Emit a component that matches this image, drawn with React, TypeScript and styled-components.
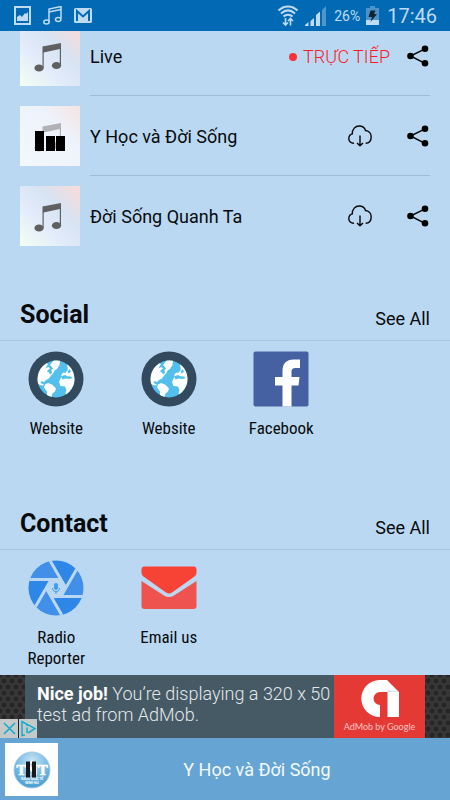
import React from "react";
import styled, { createGlobalStyle } from "styled-components";

const GlobalStyle = createGlobalStyle`
  *, *::before, *::after { box-sizing: border-box; }
  body { margin: 0; background: #bad8f2; font-family: Roboto, "Liberation Sans", sans-serif; color: #080a0c; }
  button { padding: 0; border: 0; background: none; color: inherit; font: inherit; cursor: pointer; }
  a { color: inherit; text-decoration: none; }
  h2, p, ul { margin: 0; padding: 0; list-style: none; }
  svg { display: block; flex: none; }
`;

const Screen = styled.div`
  display: flex;
  flex-direction: column;
  height: 100vh;
  background: #bad8f2;
`;

const StatusBar = styled.header`
  display: flex;
  justify-content: space-between;
  align-items: center;
  flex: none;
  height: 31px;
  padding: 0 13px 0 14px;
  background: #026ab5;
  color: #bedbf1;
`;

const StatusGroup = styled.div<{ $gap: number }>`
  display: flex;
  align-items: center;
  gap: ${(p) => p.$gap}px;
`;

const Battery = styled.span`
  padding-left: 2px;
  font-size: 14px;
`;

const Clock = styled.time`
  padding-left: 2px;
  font-size: 20px;
  line-height: 30px;
`;

const Content = styled.main`
  flex: 1;
  min-height: 0;
  overflow: hidden;
`;

const TrackList = styled.ul`
  && { margin-top: -15px; }
`;

const TrackRow = styled.li`
  display: flex;
  align-items: center;
  gap: 10px;
  padding: 0 20px;
`;

const Cover = styled.div<{ $dim?: boolean }>`
  display: flex;
  flex: none;
  width: 60px;
  height: 60px;
  background: ${(p) =>
    p.$dim
      ? "linear-gradient(45deg, #f3f8fb, #edf3fa 65%, #f6e3e4)"
      : "linear-gradient(45deg, #f3fff2, #e2ebfa 38%, #d7e3f3 65%, #fadbd8)"};
`;

const TrackBody = styled.div<{ $last?: boolean }>`
  display: flex;
  flex: 1;
  align-items: center;
  height: 80px;
  padding-top: 1px;
  border-bottom: 1px solid ${(p) => (p.$last ? "transparent" : "#9fbdd8")};
`;

const TrackTitle = styled.span`
  flex: 1;
  padding-top: 2px;
  font-size: 18px;
  line-height: 22px;
`;

const LiveTag = styled.span`
  display: flex;
  align-items: center;
  gap: 6px;
  margin-right: 17px;
  padding-top: 2px;
  color: #fb1c26;
  font-size: 18px;
  font-weight: 300;
  line-height: 22px;

  &::before {
    content: "";
    width: 8px;
    height: 8px;
    border-radius: 50%;
    background: #fb303a;
  }
`;

const IconButton = styled.button<{ $gap?: number }>`
  margin-right: ${(p) => p.$gap ?? 0}px;
`;

const SectionHead = styled.div`
  display: flex;
  justify-content: space-between;
  align-items: flex-end;
  height: 85px;
  padding: 0 20px 9px;
  border-bottom: 1px solid #a5c5e0;
`;

const SectionTitle = styled.h2`
  font-size: 25px;
  line-height: 32px;
  font-weight: 700;
`;

const SeeAll = styled.a`
  font-size: 18px;
  line-height: 24px;
`;

const Tiles = styled.ul`
  display: grid;
  grid-template-columns: repeat(4, 1fr);
  min-height: 124px;
  && { padding-top: 10px; }
`;

const Tile = styled.a`
  display: flex;
  flex-direction: column;
  align-items: center;
  gap: 11px;
  padding: 0 16px;
  font-family: "Roboto Condensed", Roboto, sans-serif;
  font-size: 17px;
  line-height: 21px;
  text-align: center;
`;

const AdStrip = styled.aside`
  position: relative;
  display: flex;
  flex: none;
  height: 63px;
  padding: 0 25px;
  background-color: #383838;
  background-image: radial-gradient(circle, #262626 2px, transparent 3px),
    radial-gradient(circle, #262626 2px, transparent 3px);
  background-size: 8px 12px;
  background-position: 0 0, 4px 6px;
`;

const AdCopy = styled.a`
  flex: 1;
  padding: 8px 2px 0 12px;
  background: #465a65;
  color: #e2e8eb;
  font-size: 18px;
  font-weight: 300;
  line-height: 21px;

  strong { color: #fff; font-weight: 700; }
`;

const AdBrand = styled.a`
  display: flex;
  flex-direction: column;
  align-items: center;
  width: 91px;
  padding-top: 4px;
  gap: 2px;
  background: #e53935;
  color: #f9c6c4;
  font-family: Lato, sans-serif;
  font-size: 9px;
  line-height: 14px;
  white-space: nowrap;
`;

const AdControls = styled.div`
  position: absolute;
  left: 0;
  bottom: 0;
  display: flex;
  gap: 1px;
  background: #222;

  button { background: #c6c9ca; }
`;

const Player = styled.footer`
  display: flex;
  align-items: center;
  flex: none;
  height: 62px;
  padding: 0 2px 0 5px;
  background: #66a5d3;
  color: #f3f9fe;
`;

const PlayerCover = styled.button`
  flex: none;
  width: 53px;
  height: 53px;
  && { background: #fff; }
`;

const NowPlaying = styled.p`
  flex: 1;
  padding-left: 8px;
  font-size: 18px;
  text-align: center;
`;

const PictureIcon = () => (
  <svg width="17" height="19" viewBox="0 0 17 19">
    <path fill="#bedbf1" fillRule="evenodd" d="M0 0h17v19H0zM2 2v15h13V2z" />
    <path fill="#bedbf1" d="M3 15v-4l3-2 2 2 3-4 1 1 2-2v9z" />
  </svg>
);

const StatusNoteIcon = () => (
  <svg width="19" height="19" viewBox="0 0 19 19" fill="none" stroke="#bedbf1" strokeWidth="1.5">
    <path d="M6 15.5V3l12-2.5v12M6 6l12-2.5" />
    <ellipse cx="3.5" cy="16" rx="2.7" ry="2" />
    <ellipse cx="15.2" cy="13.5" rx="2.7" ry="2" />
  </svg>
);

const MailStatusIcon = () => (
  <svg width="18" height="15" viewBox="0 0 18 15">
    <rect width="18" height="15" rx="1.5" fill="#bedbf1" />
    <path d="M3 13V3l6 5.5L15 3v10" fill="none" stroke="#026ab5" strokeWidth="2" />
  </svg>
);

const WifiIcon = () => (
  <svg width="22" height="22" viewBox="0 0 22 22" fill="none" stroke="#bedbf1" strokeWidth="2">
    <path d="M1.500 5.500C7 0 15 0 20.500 5.500M4 8.500C8.500 4.500 13.500 4.500 18 8.500M6.500 11.500C9 9 13 9 15.500 11.500" />
    <path d="M8.500 13v7M6 17.500 8.500 20l2.500-2.500M13.500 20.500v-7M11 16l2.500-2.500L16 16" strokeWidth="1.600" />
  </svg>
);

const SignalIcon = () => (
  <svg width="21" height="20" viewBox="0 0 21 20" fill="#bedbf1">
    <path d="M0 20v-1l3.500-3v4zM5.500 20v-5L9 12v8zM11 20V9l4-3.500V20z" />
    <path d="M17 20V4l4-4v20z" opacity=".4" />
  </svg>
);

const BatteryIcon = () => (
  <svg width="13" height="19" viewBox="0 0 13 19">
    <path d="M4 0h5v2h4v17H0V2h4z" fill="#4d93c8" />
    <path d="M0 14h13v5H0z" fill="#bedbf1" />
    <path d="M4.500 4.500h5L8 8h3l-6.500 8L6 11H2.500z" fill="#102533" />
  </svg>
);

const NoteArt = ({ dim = false }: { dim?: boolean }) => (
  <svg width="60" height="60" viewBox="0 0 60 60">
    <g fill={dim ? "#b0b2b5" : "#606062"}>
      <path d="M22.500 20.500 41 17v22h-1.200V23L23.700 26.500V42h-1.200z" />
      <ellipse cx="19" cy="42" rx="4.600" ry="3.600" />
      <ellipse cx="36.500" cy="39.500" rx="4.600" ry="3.600" />
    </g>
    {dim && <path d="M15 25h9v20h-9zM26 30h9v15h-9zM36 30h9v15h-9z" fill="#000" />}
  </svg>
);

const ShareIcon = () => (
  <svg width="23" height="22" viewBox="0 0 23 22">
    <path d="M18 3.800 3.500 11 18 18.300" fill="none" stroke="#080808" strokeWidth="1.500" />
    <circle cx="3.500" cy="11" r="3.300" />
    <circle cx="18" cy="3.800" r="3.300" />
    <circle cx="18" cy="18.300" r="3.300" />
  </svg>
);

const CloudIcon = () => (
  <svg width="24" height="22" viewBox="0 0 24 22" fill="none" stroke="#080808" strokeWidth="1.400">
    <path d="M6 18.300C3 18.500.8 16.500.8 13.500c0-2.300 1.300-4 3.500-4.600C4.200 4 7.200 1 11.200 1c3.300 0 5.500 1.800 6.300 4.500 3.300.3 5.700 2.800 5.700 6.300 0 3.800-2.200 6.400-5.500 6.500" />
    <path d="M12 10.500v10M9 18l3 2.700 3-2.700" />
  </svg>
);

const GlobeIcon = () => (
  <svg width="56" height="56" viewBox="0 0 56 56">
    <clipPath id="globe"><circle cx="28" cy="28" r="18.500" /></clipPath>
    <circle cx="28" cy="28" r="27.500" fill="#32495e" />
    <circle cx="28" cy="28" r="18.500" fill="#52bfec" />
    <g fill="#fff" clipPath="url(#globe)">
      <path d="M8 31V18l8-7 4 2-2.500 4.500 3-1.500 1.500 1.500-2 1.500-1 1.500 2 1 1 2 2-1.500-.500-3 1.500-1.500-1.500-2L22 14l4-5h6l-.5 5-2.500 4-2.500 1.500-1 2.500-2.500 2.500-2 3-3 1.500-2 2-2.500-1-1 2 3.500 1.500-1 1-3-.5z" />
      <path d="M17 33.500l3-1.500 4 1.500 4 4-1 3-2.500 2-1.500 5-4-2v-5l-3-4z" />
      <path d="M39 12l10 9v20l-10 5-1.500-4 1-3-1.500-3.500-4.500-.500-1.500-4 1.500-3.500 1-1.500v-3l2-1.500 4-3z" />
    </g>
    <g fill="#52bfec">
      <path d="M37 14.500l2.500 2v3L37 22l-2-1v-4zM41.500 18l1.500 2.500-2 2-1.500-1.500z" />
      <path d="M33 25.500l4-1.500 2.500 1.200 3.500.3 1.500 1.500-3 1-4-.5-3 1z" />
    </g>
  </svg>
);

const FacebookIcon = () => (
  <svg width="56" height="56" viewBox="0 0 56 56">
    <rect x=".5" y=".5" width="55" height="55" rx="2" fill="#4661a2" />
    <path d="M29.500 55.500V34.500H22V26h7.500v-6c0-7.500 4-11.500 11-11.500h6.500V17h-4.500c-3 0-4 1.200-4 3.500V26h8l-1 8.500h-7v21z" fill="#fff" />
  </svg>
);

const ReporterIcon = () => (
  <svg width="56" height="56" viewBox="-28 -28 56 56">
    <clipPath id="lens"><circle r="27.500" /></clipPath>
    <g clipPath="url(#lens)">
      {[0, 60, 120, 180, 240, 300].map((angle, i) => (
        <path
          key={angle}
          d="M4.900 8.500H44L25 -26.200z"
          transform={`rotate(${angle})`}
          fill={i % 2 ? "#2e86e6" : "#418fe8"}
        />
      ))}
      {[0, 60, 120, 180, 240, 300].map((angle) => (
        <path key={angle} d="M-5 8.500H30" transform={`rotate(${angle})`} stroke="#bad8f2" strokeWidth="3" />
      ))}
    </g>
    <rect x="-2" y="-5" width="4" height="7" rx="2" fill="#3c9cf0" />
    <path d="M-3.500 0c0 5 7 5 7 0M0 3.500V6" fill="none" stroke="#3c9cf0" />
  </svg>
);

const EmailIcon = () => (
  <svg width="56" height="56" viewBox="0 0 56 56">
    <path d="M.5 21 23 35.500q5 3 10 0L55.500 21v25q0 3-3 3h-49q-3 0-3-3z" fill="#ef5350" />
    <path d="M3.500 6.500h49q3 0 3 3v3q0 2.500-2 4L31 32.500q-3 2-6 0L2.500 16.500q-2-1.500-2-4v-3q0-3 3-3z" fill="#f64336" />
  </svg>
);

const AdMobLogo = () => (
  <svg width="38" height="39" viewBox="0 0 38 39">
    <path d="M18.500 1H26l12 12v25H26.500V13H19a6.500 6.500 0 0 0 0 13v12A18.500 18.500 0 0 1 18.500 1z" fill="#fff" />
    <path d="M26.500 13H38L26.500 11z" fill="#ddd" />
  </svg>
);

const CloseIcon = () => (
  <svg width="18" height="19" viewBox="0 0 18 19" stroke="#12aecb" strokeWidth="1.600">
    <path d="M4 4l11 11M15 4L4 15" />
  </svg>
);

const AdChoicesIcon = () => (
  <svg width="18" height="19" viewBox="0 0 18 19" fill="none" stroke="#12aecb" strokeWidth="1.500">
    <path d="M6 16l-3 .5v-14L16 9.500 9 14" />
    <path d="M8 8.500V14M8 5.500V7" />
  </svg>
);

const StationLogo = () => (
  <svg width="53" height="53" viewBox="0 0 53 53">
    <defs>
      <radialGradient id="disc" cx=".5" cy=".25" r=".8">
        <stop offset="0" stopColor="#c5e3f5" />
        <stop offset=".6" stopColor="#6fb7e2" />
        <stop offset="1" stopColor="#4397cf" />
      </radialGradient>
    </defs>
    <circle cx="27" cy="27" r="18" fill="url(#disc)" stroke="#a9cce4" />
    <path d="M24.500 20.500 27 17l2.500 3.500z" fill="#fff" />
    <g fill="#fff" textAnchor="middle" fontWeight="700">
      <text x="27" y="32" fontSize="13" fontFamily="DejaVu Serif, serif" stroke="#fff" strokeWidth=".6">TNT</text>
      <text x="27" y="37" fontSize="3" fontFamily="Roboto, sans-serif">RADIO QUỐC TẾ</text>
      <text x="27" y="41" fontSize="3" fontFamily="Roboto, sans-serif">MINH HẢI</text>
    </g>
    <path d="M21 18.500h4v16h-4zM27 18.500h4v16h-4z" fill="#181818" />
  </svg>
);

type Track = { title: string; live?: boolean; playing?: boolean };

const tracks: Track[] = [
  { title: "Live", live: true },
  { title: "Y Học và Đời Sống", playing: true },
  { title: "Đời Sống Quanh Ta" },
];

const sections = [
  {
    title: "Social",
    items: [
      { label: "Website", Icon: GlobeIcon },
      { label: "Website", Icon: GlobeIcon },
      { label: "Facebook", Icon: FacebookIcon },
    ],
  },
  {
    title: "Contact",
    items: [
      { label: "Radio Reporter", Icon: ReporterIcon },
      { label: "Email us", Icon: EmailIcon },
    ],
  },
];

export default function App() {
  return (
    <Screen>
      <GlobalStyle />
      <StatusBar>
        <StatusGroup $gap={12}>
          <PictureIcon />
          <StatusNoteIcon />
          <MailStatusIcon />
        </StatusGroup>
        <StatusGroup $gap={6}>
          <WifiIcon />
          <SignalIcon />
          <Battery>26%</Battery>
          <BatteryIcon />
          <Clock>17:46</Clock>
        </StatusGroup>
      </StatusBar>

      <Content>
        <TrackList>
          {tracks.map((track, i) => (
            <TrackRow key={track.title}>
              <Cover $dim={track.playing}>
                <NoteArt dim={track.playing} />
              </Cover>
              <TrackBody $last={i === tracks.length - 1}>
                <TrackTitle>{track.title}</TrackTitle>
                {track.live ? (
                  <LiveTag>TRỰC TIẾP</LiveTag>
                ) : (
                  <IconButton $gap={35} aria-label={`Download ${track.title}`}>
                    <CloudIcon />
                  </IconButton>
                )}
                <IconButton aria-label={`Share ${track.title}`}>
                  <ShareIcon />
                </IconButton>
              </TrackBody>
            </TrackRow>
          ))}
        </TrackList>

        {sections.map(({ title, items }) => (
          <section key={title}>
            <SectionHead>
              <SectionTitle>{title}</SectionTitle>
              <SeeAll href="#">See All</SeeAll>
            </SectionHead>
            <Tiles>
              {items.map(({ label, Icon }, i) => (
                <li key={i}>
                  <Tile href="#">
                    <Icon />
                    {label}
                  </Tile>
                </li>
              ))}
            </Tiles>
          </section>
        ))}
      </Content>

      <AdStrip>
        <AdCopy href="#">
          <strong>Nice job!</strong> You’re displaying a 320 x 50 test ad from AdMob.
        </AdCopy>
        <AdBrand href="#">
          <AdMobLogo />
          <span>AdMob by Google</span>
        </AdBrand>
        <AdControls>
          <button aria-label="Close ad"><CloseIcon /></button>
          <button aria-label="Ad choices"><AdChoicesIcon /></button>
        </AdControls>
      </AdStrip>

      <Player>
        <PlayerCover aria-label="Pause">
          <StationLogo />
        </PlayerCover>
        <NowPlaying>Y Học và Đời Sống</NowPlaying>
      </Player>
    </Screen>
  );
}
